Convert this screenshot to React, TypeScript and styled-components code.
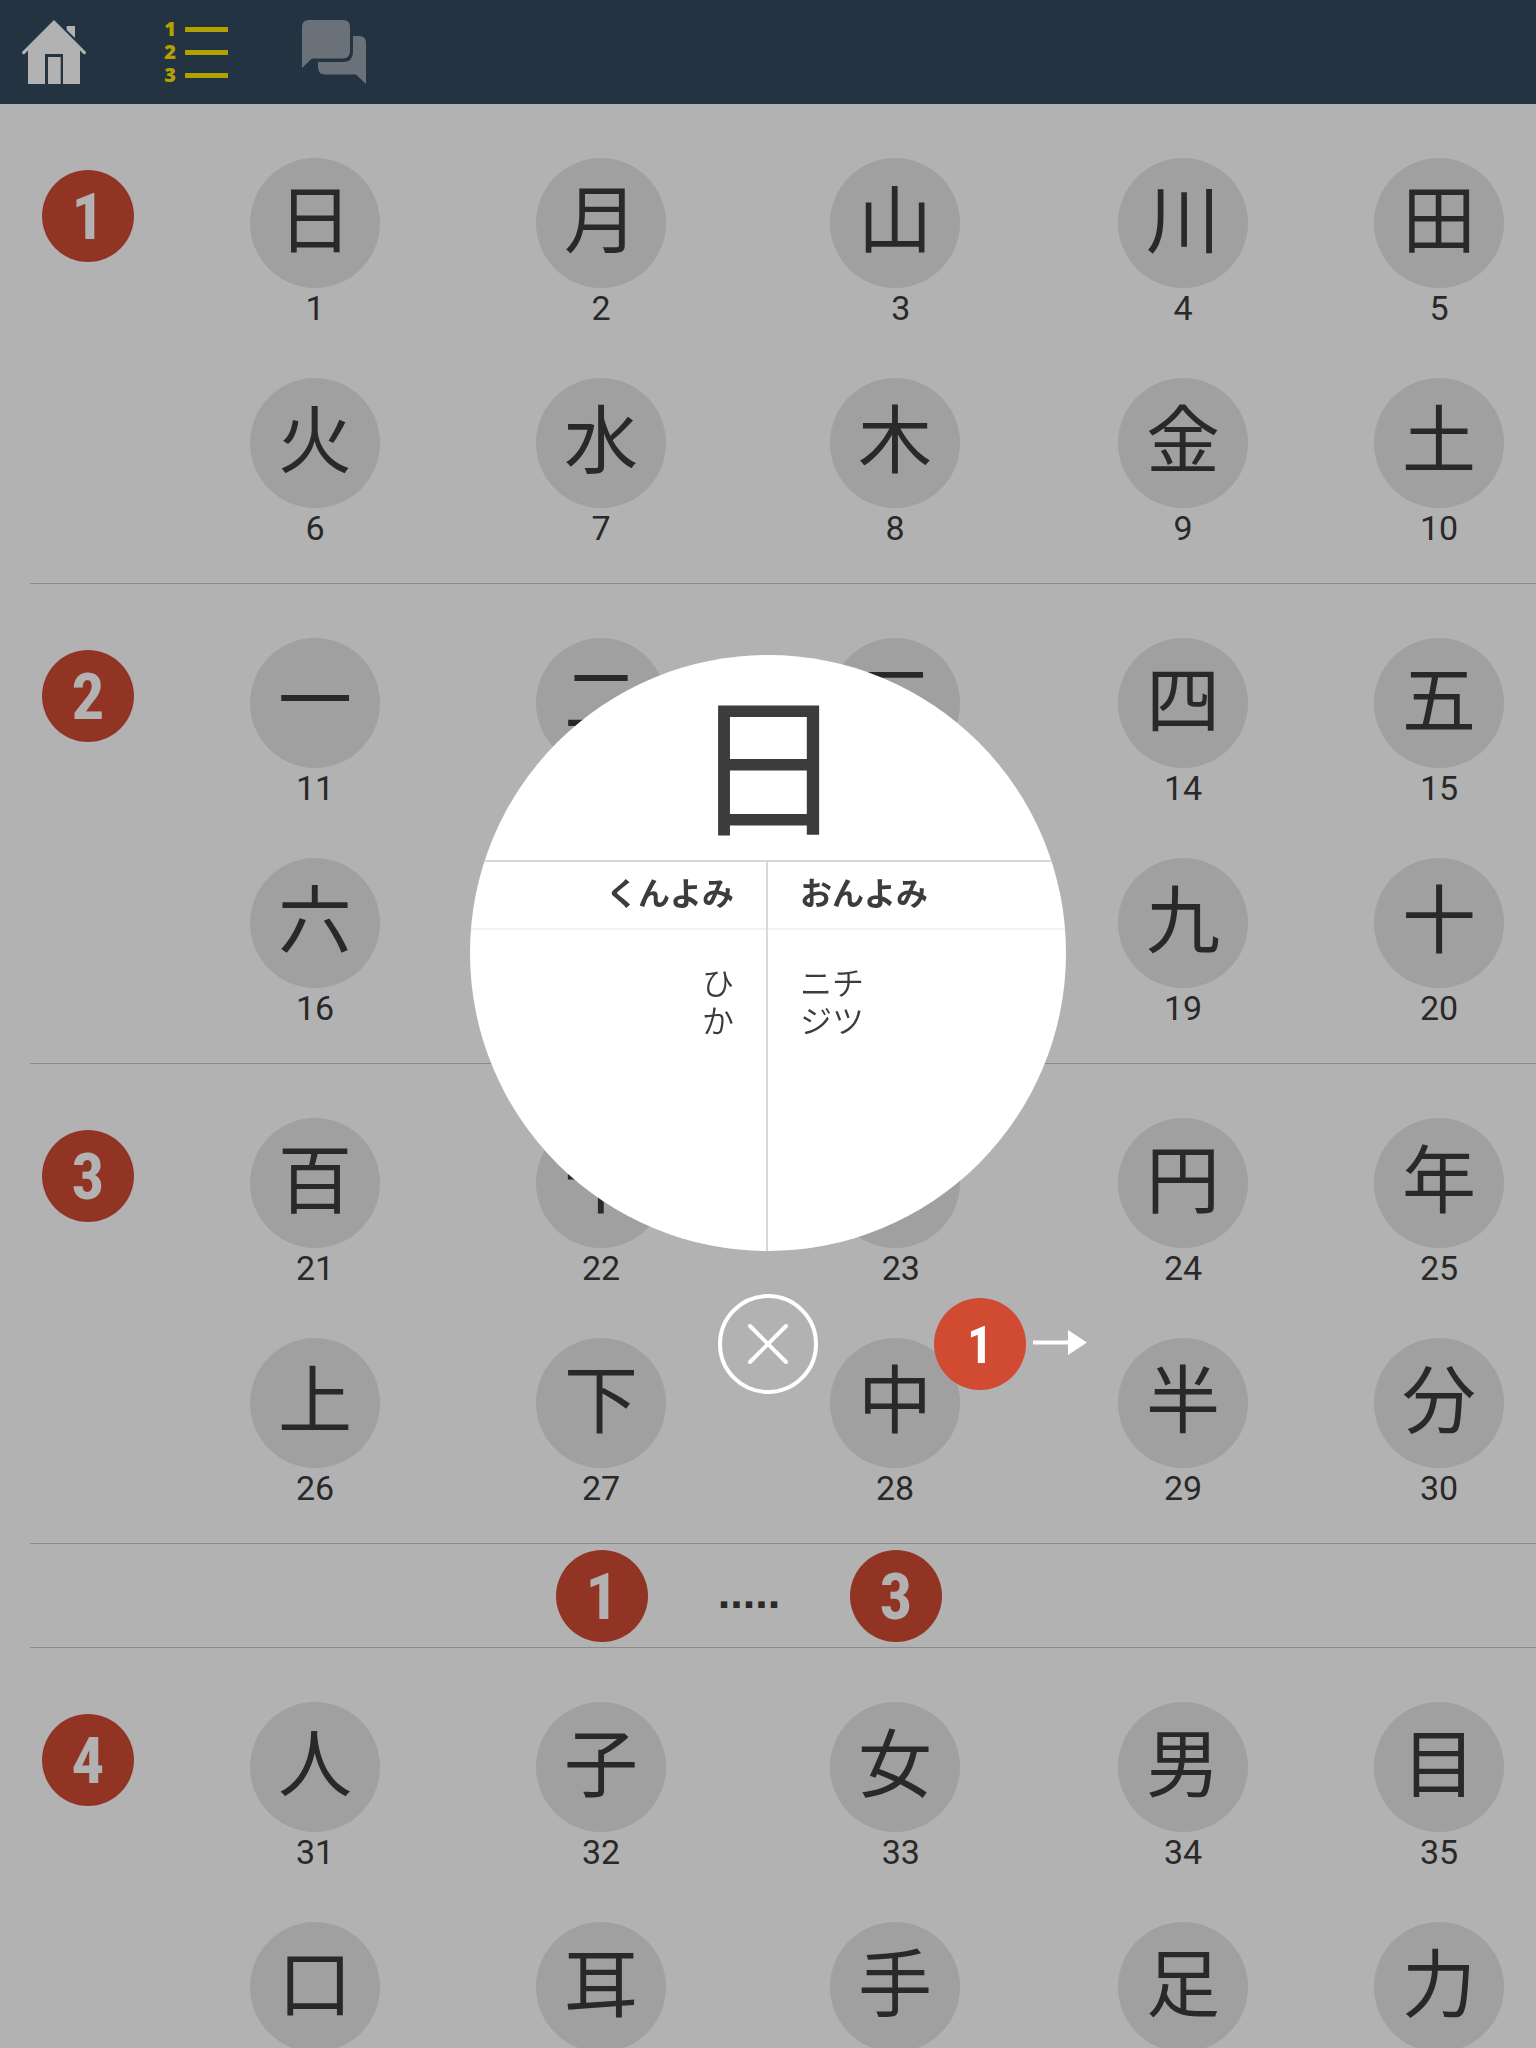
import React from "react";
import styled, { createGlobalStyle } from "styled-components";

const GlobalStyle = createGlobalStyle`
  *, *::before, *::after { box-sizing: border-box; }
  body {
    margin: 0;
    background: #fff;
    color: #3c3c3c;
    font-family: Roboto, "Liberation Sans", "Noto Sans CJK JP", sans-serif;
  }
  button {
    margin: 0;
    padding: 0;
    border: 0;
    background: none;
    color: inherit;
    font: inherit;
    cursor: pointer;
  }
  svg { display: block; overflow: visible; }
`;

const Page = styled.div`
  height: 100vh;
  overflow: hidden;
`;

const Toolbar = styled.nav`
  display: flex;
  align-items: flex-start;
  gap: 72px;
  height: 104px;
  padding: 20px 22px;
  background: #34495e;
`;

const ToolButton = styled.button<{ $color: string }>`
  width: 68px;
  height: 64px;
  color: ${(p) => p.$color};
`;

const Lesson = styled.section`
  display: grid;
  grid-template-columns: 194fr 242fr 330fr 258fr 318fr 194fr;
  grid-template-rows: 220px 220px;
  height: 480px;
  padding-top: 54px;
`;

const Divider = styled.hr`
  height: 1px;
  margin: -1px 0 0 30px;
  border: 0;
  background: #c8c8c8;
`;

const Badge = styled.button<{ $active?: boolean }>`
  width: 92px;
  height: 92px;
  border-radius: 50%;
  background: #d14b33;
  color: #fff;
  font-family: "Roboto Condensed", Roboto, "Liberation Sans", sans-serif;
  font-weight: 700;
  font-size: ${(p) => (p.$active ? 51 : 65)}px;
  line-height: 95px;
  text-align: center;
`;

const LessonMark = styled.div`
  grid-row: span 2;
  padding: 12px 0 0 42px;
`;

const Cell = styled.div`
  display: flex;
  flex-direction: column;
  align-items: center;
`;

const KanjiButton = styled.button`
  display: flex;
  align-items: flex-start;
  justify-content: center;
  width: 130px;
  height: 130px;
  border-radius: 50%;
  background: #e5e5e5;
  font-family: "Noto Sans CJK JP", sans-serif;
  font-size: 74px;
  line-height: 114px;
`;

const Index = styled.span`
  font-size: 34px;
  line-height: 40px;
`;

const Review = styled.section`
  display: grid;
  grid-template-columns: repeat(3, 147px);
  justify-content: center;
  justify-items: center;
  height: 104px;
  padding: 6px 38px 0 0;
`;

const Dots = styled.span`
  font-family: "Liberation Sans", sans-serif;
  font-size: 45px;
  font-weight: 700;
  line-height: 86px;
`;

const Overlay = styled.div`
  position: fixed;
  inset: 0;
  display: flex;
  flex-direction: column;
  align-items: center;
  justify-content: center;
  gap: 43px;
  background: rgba(0, 0, 0, 0.3);
`;

const Disc = styled.div`
  display: grid;
  grid-template-rows: 207px 389px;
  width: 596px;
  height: 596px;
  border-radius: 50%;
  overflow: hidden;
  background: #fff;
  font-family: "Noto Sans CJK JP", sans-serif;
`;

const BigKanji = styled.h1`
  margin: 0;
  border-bottom: 2px solid #d8d8d8;
  font-size: 154px;
  font-weight: 400;
  line-height: 205px;
  text-align: center;
`;

const Readings = styled.div`
  display: grid;
  grid-template-columns: 1fr 1fr;
`;

const Reading = styled.section<{ $side: "left" | "right" }>`
  text-align: ${(p) => (p.$side === "left" ? "right" : "left")};
  border-right: ${(p) => (p.$side === "left" ? "2px solid #d8d8d8" : "0")};
`;

const ReadingTitle = styled.h2`
  margin: 0;
  padding: 0 32px 8px;
  border-bottom: 2px solid #f2f2f2;
  font-size: 32px;
  font-weight: 700;
  line-height: 58px;
`;

const ReadingList = styled.ul`
  margin: 0;
  padding: 32px;
  list-style: none;
  font-size: 32px;
  font-weight: 350;
  line-height: 38px;
`;

const Controls = styled.div`
  display: grid;
  grid-template-columns: 1fr 100px 1fr;
  align-items: center;
  width: 100%;
`;

const CloseButton = styled.button`
  display: grid;
  place-items: center;
  grid-column: 2;
  width: 100px;
  height: 100px;
  border: 4px solid #fff;
  border-radius: 50%;
`;

const NextGroup = styled.div`
  display: flex;
  align-items: center;
  gap: 7px;
  padding-left: 116px;
`;

const HomeIcon = () => (
  <svg width="68" height="64" viewBox="0 0 68 64" fill="currentColor" aria-hidden="true">
    <path d="M32 0 64 32Q64 35 61.500 34L58 30.500V64H41V34H23V64H6V30.500L2.500 34Q0 35 0 32Z" />
    <path d="M44.700 6H53V18L44.700 10Z" />
    <path d="M26 37H38.700V64H26Z" />
  </svg>
);

const ListIcon = () => (
  <svg width="68" height="64" viewBox="0 0 68 64" fill="currentColor" aria-hidden="true">
    <g fontFamily="'Open Sans', sans-serif" fontWeight="800" fontSize="20" textAnchor="middle">
      <text x="8" y="16">1</text>
      <text x="8" y="39">2</text>
      <text x="8" y="62">3</text>
    </g>
    <path d="M23 7h43v5H23zM23 30h43v5H23zM23 53h43v5H23z" />
  </svg>
);

const ChatIcon = () => (
  <svg width="68" height="64" viewBox="0 0 68 64" fill="currentColor" aria-hidden="true">
    <path d="M7 0H41Q48 0 48 7V31Q48 38.500 40 38.500H10L0 48V7Q0 0 7 0Z" />
    <path d="M51 16H57Q64 16 64 23V64L54 54.500H23Q16 54.500 16 47V42H41Q51 42 51 32Z" />
  </svg>
);

const CloseIcon = () => (
  <svg width="40" height="40" viewBox="0 0 40 40" aria-hidden="true">
    <path d="M2 2 38 38M38 2 2 38" stroke="#fff" strokeWidth="4" strokeLinecap="round" />
  </svg>
);

const ArrowIcon = () => (
  <svg width="54" height="26" viewBox="0 0 54 26" fill="#fff" aria-hidden="true">
    <path d="M0 9.500H35V-1L54 11.500 35 24V13.500H0Z" />
  </svg>
);

const LESSONS = [
  { id: 1, kanji: "日月山川田火水木金土" },
  { id: 2, kanji: "一二三四五六七八九十" },
  { id: 3, kanji: "百千万円年上下中半分" },
  { id: 4, kanji: "人子女男目口耳手足力" },
];

const LessonBlock = ({ id, kanji }: { id: number; kanji: string }) => (
  <Lesson aria-label={`Lesson ${id}`}>
    <LessonMark>
      <Badge>{id}</Badge>
    </LessonMark>
    {kanji.split("").map((char, i) => (
      <Cell key={char}>
        <KanjiButton>{char}</KanjiButton>
        <Index>
          {i === 2 ? "\u2004" : ""}
          {(id - 1) * 10 + i + 1}
        </Index>
      </Cell>
    ))}
  </Lesson>
);

export default function App() {
  return (
    <>
      <GlobalStyle />
      <Page>
        <Toolbar>
          <ToolButton $color="#fff" aria-label="Home">
            <HomeIcon />
          </ToolButton>
          <ToolButton $color="#ffe700" aria-label="Lessons">
            <ListIcon />
          </ToolButton>
          <ToolButton $color="#99a3ae" aria-label="Chat">
            <ChatIcon />
          </ToolButton>
        </Toolbar>
        {LESSONS.slice(0, 3).map((l) => (
          <React.Fragment key={l.id}>
            <LessonBlock {...l} />
            <Divider />
          </React.Fragment>
        ))}
        <Review aria-label="Review">
          <Badge>1</Badge>
          <Dots>.....</Dots>
          <Badge>3</Badge>
        </Review>
        <Divider />
        <LessonBlock {...LESSONS[3]} />
      </Page>
      <Overlay role="dialog" aria-label="日">
        <Disc>
          <BigKanji>日</BigKanji>
          <Readings>
            <Reading $side="left">
              <ReadingTitle>くんよみ</ReadingTitle>
              <ReadingList>
                <li>ひ</li>
                <li>か</li>
              </ReadingList>
            </Reading>
            <Reading $side="right">
              <ReadingTitle>おんよみ</ReadingTitle>
              <ReadingList>
                <li>ニチ</li>
                <li>ジツ</li>
              </ReadingList>
            </Reading>
          </Readings>
        </Disc>
        <Controls>
          <CloseButton aria-label="Close">
            <CloseIcon />
          </CloseButton>
          <NextGroup>
            <Badge $active>1</Badge>
            <ArrowIcon />
          </NextGroup>
        </Controls>
      </Overlay>
    </>
  );
}
